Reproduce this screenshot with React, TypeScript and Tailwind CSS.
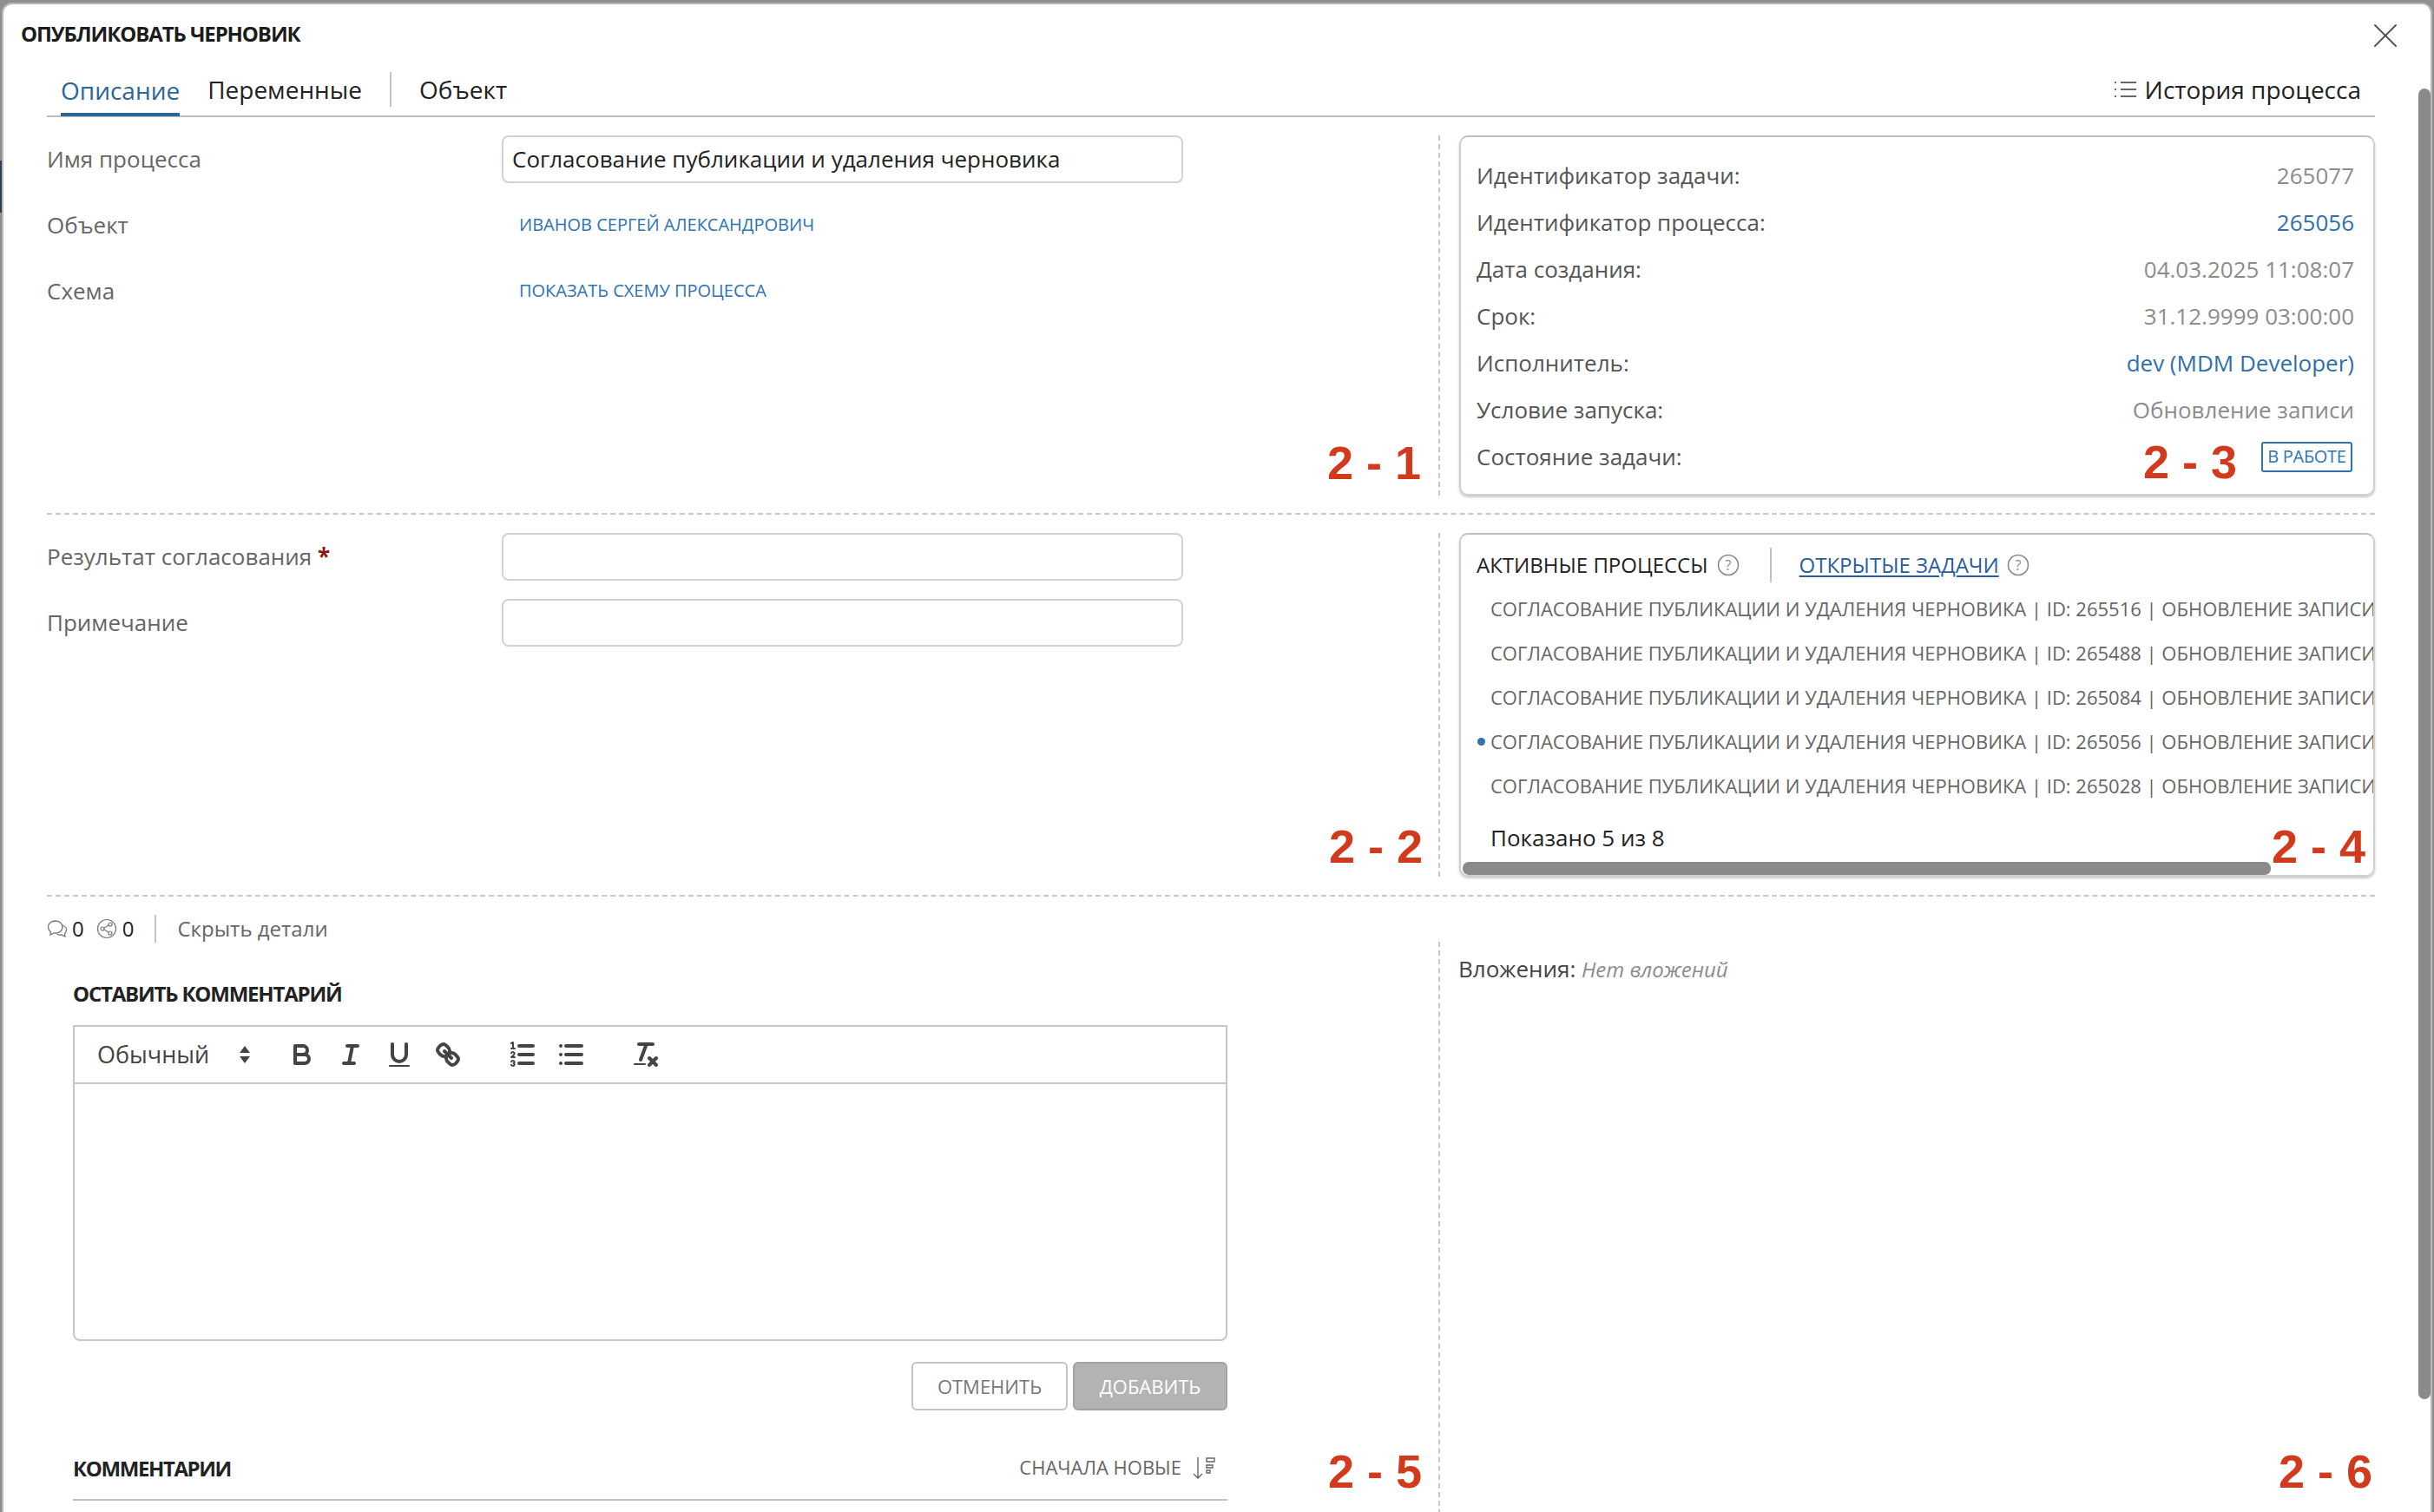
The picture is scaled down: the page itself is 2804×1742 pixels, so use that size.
import React from 'react'
import { X } from 'lucide-react'

const infoRows = [
  { label: 'Идентификатор задачи:', value: '265077', tone: 'text-[#8c8c8c]' },
  { label: 'Идентификатор процесса:', value: '265056', tone: 'text-[#2f6fab]' },
  { label: 'Дата создания:', value: '04.03.2025 11:08:07', tone: 'text-[#8c8c8c]' },
  { label: 'Срок:', value: '31.12.9999 03:00:00', tone: 'text-[#8c8c8c]' },
  { label: 'Исполнитель:', value: 'dev (MDM Developer)', tone: 'text-[#2f6fab]' },
  { label: 'Условие запуска:', value: 'Обновление записи', tone: 'text-[#8c8c8c]' },
]

const processIds = ['265516', '265488', '265084', '265056', '265028']

// Red annotation laid over the screenshot
function Mark({ text, className }: { text: string; className: string }) {
  return (
    <span
      className={`absolute font-['Liberation_Sans',sans-serif] text-[54px] leading-[54px] font-bold text-[#d23a1e] whitespace-nowrap ${className}`}
    >
      {text}
    </span>
  )
}

function HelpIcon() {
  return (
    <svg width="26" height="26" viewBox="0 0 26 26" fill="none" className="shrink-0">
      <circle cx="13" cy="13" r="11.5" stroke="#8a8a8a" strokeWidth="1.6" />
      <text x="13" y="18.5" textAnchor="middle" fontSize="16" fill="#8a8a8a" fontFamily="Open Sans">
        ?
      </text>
    </svg>
  )
}

function QuillIcon({ children }: { children: React.ReactNode }) {
  return (
    <span className="flex w-[56px] h-[36px] items-center justify-center">
      <svg
        width="36"
        height="36"
        viewBox="0 0 18 18"
        fill="none"
        stroke="#444444"
        strokeWidth="2"
        strokeLinecap="round"
        strokeLinejoin="round"
      >
        {children}
      </svg>
    </span>
  )
}

function Toolbar() {
  return (
    <div className="flex h-[66px] items-center border-b-2 border-[#c8c8c8] pl-[26px]">
      <span className="w-[130px] text-[27px] font-medium text-[#444444]">Обычный</span>
      <svg width="14" height="24" viewBox="0 0 14 24" className="ml-[33px] mr-[31px]">
        <path d="M7 2 L13 10 H1 Z M7 22 L13 14 H1 Z" fill="#444444" />
      </svg>
      <QuillIcon>
        <path d="M5,4H9.5A2.5,2.5,0,0,1,12,6.5v0A2.5,2.5,0,0,1,9.5,9H5V4Z" />
        <path d="M5,9h5.5A2.5,2.5,0,0,1,13,11.5v0A2.5,2.5,0,0,1,10.5,14H5V9Z" />
      </QuillIcon>
      <QuillIcon>
        <line x1="7" x2="13" y1="4" y2="4" />
        <line x1="5" x2="11" y1="14" y2="14" />
        <line x1="8" x2="10" y1="14" y2="4" />
      </QuillIcon>
      <QuillIcon>
        <path d="M5,3V9a4.012,4.012,0,0,0,4,4H9a4.012,4.012,0,0,0,4-4V3" />
        <rect x="3" y="15" width="12" height="1" rx=".5" ry=".5" fill="#444444" stroke="none" />
      </QuillIcon>
      <QuillIcon>
        <line x1="7" x2="11" y1="7" y2="11" />
        <path d="M8.9,4.577a3.476,3.476,0,0,1,.36,4.679A3.476,3.476,0,0,1,4.577,8.9C3.185,7.5,2.035,6.4,4.217,4.217S7.5,3.185,8.9,4.577Z" />
        <path d="M13.423,9.1a3.476,3.476,0,0,0-4.679-.36,3.476,3.476,0,0,0,.36,4.679c1.392,1.392,2.5,2.542,4.679.36S14.815,10.5,13.423,9.1Z" />
      </QuillIcon>
      <span className="w-[30px]" />
      <QuillIcon>
        <line x1="7" x2="15" y1="4" y2="4" />
        <line x1="7" x2="15" y1="9" y2="9" />
        <line x1="7" x2="15" y1="14" y2="14" />
        <g strokeWidth="1">
          <path d="M2.5,2.5 L3.5,2 V5.5 M2.5,5.5 H4.5" />
          <path d="M4.5,10.5h-2c0-.234,1.85-1.076,1.85-2.234A0.959,0.959,0,0,0,2.5,8.156" />
          <path d="M2.5,14.846a0.959,0.959,0,0,0,1.85-.109A0.7,0.7,0,0,0,3.75,14a0.688,0.688,0,0,0,.6-0.736,0.959,0.959,0,0,0-1.85-.109" />
        </g>
      </QuillIcon>
      <QuillIcon>
        <line x1="6" x2="15" y1="4" y2="4" />
        <line x1="6" x2="15" y1="9" y2="9" />
        <line x1="6" x2="15" y1="14" y2="14" />
        <line x1="3" x2="3" y1="4" y2="4" />
        <line x1="3" x2="3" y1="9" y2="9" />
        <line x1="3" x2="3" y1="14" y2="14" />
      </QuillIcon>
      <span className="w-[30px]" />
      <QuillIcon>
        <line x1="5" x2="13" y1="3" y2="3" />
        <line x1="6" x2="9.35" y1="12" y2="3" />
        <line x1="11" x2="15" y1="11" y2="15" />
        <line x1="15" x2="11" y1="11" y2="15" />
        <rect x="2" y="14" width="7" height="1" rx=".5" ry=".5" fill="#444444" stroke="none" />
      </QuillIcon>
    </div>
  )
}

export default function App() {
  return (
    <div className="relative w-[2804px] h-[1742px] overflow-hidden bg-[#8f8f8f] pt-[3px] pl-[2px] font-['Open_Sans',sans-serif] text-[26px] text-[#666666]">
      {/* Bit of the page behind the dialog */}
      <div className="absolute left-0 top-[185px] h-[60px] w-[2px] bg-[#2d3d58]" />

      <div className="relative h-[1739px] w-[2800px] rounded-t-[12px] border-2 border-b-0 border-[#b8b8b8] bg-white">
        {/* Page scrollbar */}
        <div className="absolute right-0 top-[97px] h-[1510px] w-[14px] rounded-[7px] bg-[#8a8a8a]" />

        {/* Title */}
        <div className="flex h-[67px] items-center justify-between pl-[20px] pr-[28px]">
          <h1 className="text-[24px] font-bold text-[#1c1c1c] tracking-[-1.1px]">ОПУБЛИКОВАТЬ ЧЕРНОВИК</h1>
          <X size={48} strokeWidth={1} className="mt-[4px] text-[#555555]" />
        </div>

        <div className="w-[2682px] ml-[50px]">
          {/* Tabs */}
          <div className="flex h-[63px] items-center border-b-2 border-[#bdbdbd] pl-[16px] text-[#222222] text-[28px]">
            <span className="flex h-full items-center border-b-[4px] -mb-[2px] pt-[4px] border-[#2b6699] text-[#2b6699]">Описание</span>
            <span className="ml-[32px]">Переменные</span>
            <span className="ml-[32px] h-[40px] w-[2px] bg-[#c4c4c4]" />
            <span className="ml-[32px]">Объект</span>
            <span className="ml-auto mr-[16px] flex items-center gap-[10px]">
              <svg width="26" height="22" viewBox="0 0 26 22" stroke="#666666" strokeWidth="2" fill="none">
                <path d="M8 3H26M8 11H26M8 19H26" />
                <path d="M1 3H4M1 11H4M1 19H4" strokeDasharray="2 1" />
              </svg>
              История процесса
            </span>
          </div>

          {/* Section 1 */}
          <div className="flex h-[415px] mt-[21px]">
            <div className="relative w-[1605px] border-r-2 border-dashed border-[#c8c8c8]">
              <div className="grid grid-cols-[524px_785px] grid-rows-[55px_76px_76px] items-center">
                <span>Имя процесса</span>
                <div className="flex h-[55px] items-center rounded-[8px] border-2 border-[#d2d2d2] px-[10px] text-[#222222]">
                  Согласование публикации и удаления черновика
                </div>
                <span className="mt-[20px]">Объект</span>
                <span className="mt-[20px] pl-[20px] text-[20px] text-[#2f73b0]">ИВАНОВ СЕРГЕЙ АЛЕКСАНДРОВИЧ</span>
                <span className="mt-[20px]">Схема</span>
                <span className="mt-[20px] pl-[20px] text-[20px] text-[#2f73b0]">ПОКАЗАТЬ СХЕМУ ПРОЦЕССА</span>
              </div>
              <Mark text="2 - 1" className="right-[20px] bottom-[11px]" />
            </div>
            <div className="ml-[22px] flex-1 rounded-[10px] border-2 border-[#cfcfcf] border-t-[#c0c0c0] shadow-[0_2px_3px_rgba(0,0,0,0.22)] pl-[18px] pr-[22px] pt-[17px]">
              {infoRows.map((row) => (
                <div key={row.label} className="flex h-[54px] items-center justify-between">
                  <span className="text-[#555555]">{row.label}</span>
                  <span className={row.tone}>{row.value}</span>
                </div>
              ))}
              <div className="relative flex h-[54px] items-center justify-between">
                <span className="text-[#555555]">Состояние задачи:</span>
                <span className="mr-[2px] flex h-[35px] w-[105px] items-center justify-center rounded-[3px] border-2 border-[#2f73b0] text-[20px] tracking-[-0.3px] text-[#2f73b0]">
                  В РАБОТЕ
                </span>
                <Mark text="2 - 3" className="right-[135px] top-[6px]" />
              </div>
            </div>
          </div>

          <div className="mt-[20px] border-t-2 border-dashed border-[#c8c8c8]" />

          {/* Section 2 */}
          <div className="flex h-[396px] mt-[21px]">
            <div className="relative w-[1605px] border-r-2 border-dashed border-[#c8c8c8]">
              <div className="grid grid-cols-[524px_785px] grid-rows-[55px_55px] items-center gap-y-[21px]">
                <span>
                  Результат согласования <span className="font-bold text-[#8b1a10]">*</span>
                </span>
                <div className="h-[55px] rounded-[8px] border-2 border-[#d2d2d2]" />
                <span>Примечание</span>
                <div className="h-[55px] rounded-[8px] border-2 border-[#d2d2d2]" />
              </div>
              <Mark text="2 - 2" className="right-[18px] bottom-[8px]" />
            </div>
            <div className="relative ml-[22px] flex-1 overflow-hidden rounded-[10px] border-2 border-[#cfcfcf] border-t-[#c0c0c0] shadow-[0_2px_3px_rgba(0,0,0,0.22)] pl-[18px] pt-[15px]">
              <div className="flex h-[40px] items-center text-[24px] text-[#222222]">
                <span>АКТИВНЫЕ ПРОЦЕССЫ</span>
                <span className="ml-[10px]"><HelpIcon /></span>
                <span className="ml-[35px] h-[40px] w-[2px] bg-[#c4c4c4]" />
                <span className="ml-[32px] text-[#2a5da0] underline underline-offset-[3px]">ОТКРЫТЫЕ ЗАДАЧИ</span>
                <span className="ml-[9px]"><HelpIcon /></span>
              </div>
              <div className="mt-[5px]">
                {processIds.map((id) => (
                  <div key={id} className="relative flex h-[51px] items-center whitespace-nowrap pl-[16px] text-[22px]">
                    {id === '265056' && <span className="absolute left-[1px] h-[9px] w-[9px] rounded-full bg-[#2f73b0]" />}
                    СОГЛАСОВАНИЕ ПУБЛИКАЦИИ И УДАЛЕНИЯ ЧЕРНОВИКА | ID: {id} | ОБНОВЛЕНИЕ ЗАПИСИ
                  </div>
                ))}
              </div>
              <div className="mt-[15px] pl-[16px] text-[#222222]">Показано 5 из 8</div>
              <div className="absolute left-[2px] bottom-0 h-[15px] w-[931px] rounded-[7px] bg-[#8a8a8a]" />
              <Mark text="2 - 4" className="right-[9px] bottom-[6px]" />
            </div>
          </div>

          <div className="mt-[21px] border-t-2 border-dashed border-[#c8c8c8]" />

          {/* Details bar */}
          <div className="flex h-[28px] mt-[23px] mb-[1px] items-center text-[24px]">
            <svg width="24" height="22" viewBox="0 0 24 22" fill="none" stroke="#777777" strokeWidth="1.3">
              <path d="M10 2C5 2 1.5 5 1.5 9c0 2.4 1.2 4.2 3 5.5L4 18l4-2c4 .6 9-1 10-6 .6-4-3-8-8-8Z" />
              <path d="M18 7c3 1 5 3 4.5 6-.2 1.5-1 2.5-2 3.5L21 20l-4-2c-2 .4-4 0-5.5-1" />
            </svg>
            <span className="ml-[5px] text-[#222222]">0</span>
            <svg width="24" height="24" viewBox="0 0 24 24" fill="none" stroke="#777777" strokeWidth="1.2" className="ml-[14px]">
              <circle cx="12" cy="12" r="10.5" />
              <circle cx="16" cy="7" r="2" />
              <circle cx="7" cy="12" r="2" />
              <circle cx="16" cy="17" r="2" />
              <path d="M9 11 14 8M9 13 14 16" />
            </svg>
            <span className="ml-[6px] text-[#222222]">0</span>
            <span className="ml-[24px] h-[32px] w-[2px] bg-[#c4c4c4]" />
            <span className="ml-[24px]">Скрыть детали</span>
          </div>

          {/* Comments and attachments */}
          <div className="flex">
            <div className="relative h-[660px] w-[1605px] border-r-2 border-dashed border-[#c8c8c8] pl-[30px] pt-[44px]">
              <div className="w-[1330px]">
                <h2 className="text-[24px] leading-[32px] font-bold text-[#222222] tracking-[-1.2px]">ОСТАВИТЬ КОММЕНТАРИЙ</h2>
                <div className="mt-[20px] h-[364px] rounded-b-[8px] border-2 border-[#c8c8c8]">
                  <Toolbar />
                </div>
                <div className="mt-[24px] flex justify-end gap-[6px] text-[22px]">
                  <span className="flex h-[56px] w-[180px] items-center justify-center rounded-[6px] border-2 border-[#c4c4c4] text-[#777777]">ОТМЕНИТЬ</span>
                  <span className="flex h-[56px] w-[178px] items-center justify-center rounded-[6px] border-2 border-[#a3a3a3] bg-[#b3b3b3] text-white">ДОБАВИТЬ</span>
                </div>
                <div className="mt-[42px] flex h-[62px] items-start justify-between border-b-2 border-[#c0c0c0] pt-[7px]">
                  <h2 className="text-[24px] font-bold text-[#222222] tracking-[-1.4px]">КОММЕНТАРИИ</h2>
                  <span className="flex items-center gap-[12px] pr-[13px] text-[22px]">
                    СНАЧАЛА НОВЫЕ
                    <svg width="28" height="26" viewBox="0 0 28 26" fill="none" stroke="#666666" strokeWidth="1.4">
                      <path d="M7 1V25M2 20l5 5 5-5" />
                      <path d="M17 2h9v4h-9ZM17 10h7v3h-7ZM17 16h4v3h-4Z" />
                    </svg>
                  </span>
                </div>
              </div>
              <Mark text="2 - 5" className="right-[19px] top-[583px]" />
            </div>
            <div className="relative flex-1 pl-[21px] pt-[12px]">
              <span className="text-[#444444]">Вложения:</span>{' '}
              <span className="italic text-[24px] text-[#8c8c8c]">Нет вложений</span>
              <Mark text="2 - 6" className="right-[3px] top-[583px]" />
            </div>
          </div>
        </div>
      </div>
    </div>
  )
}
